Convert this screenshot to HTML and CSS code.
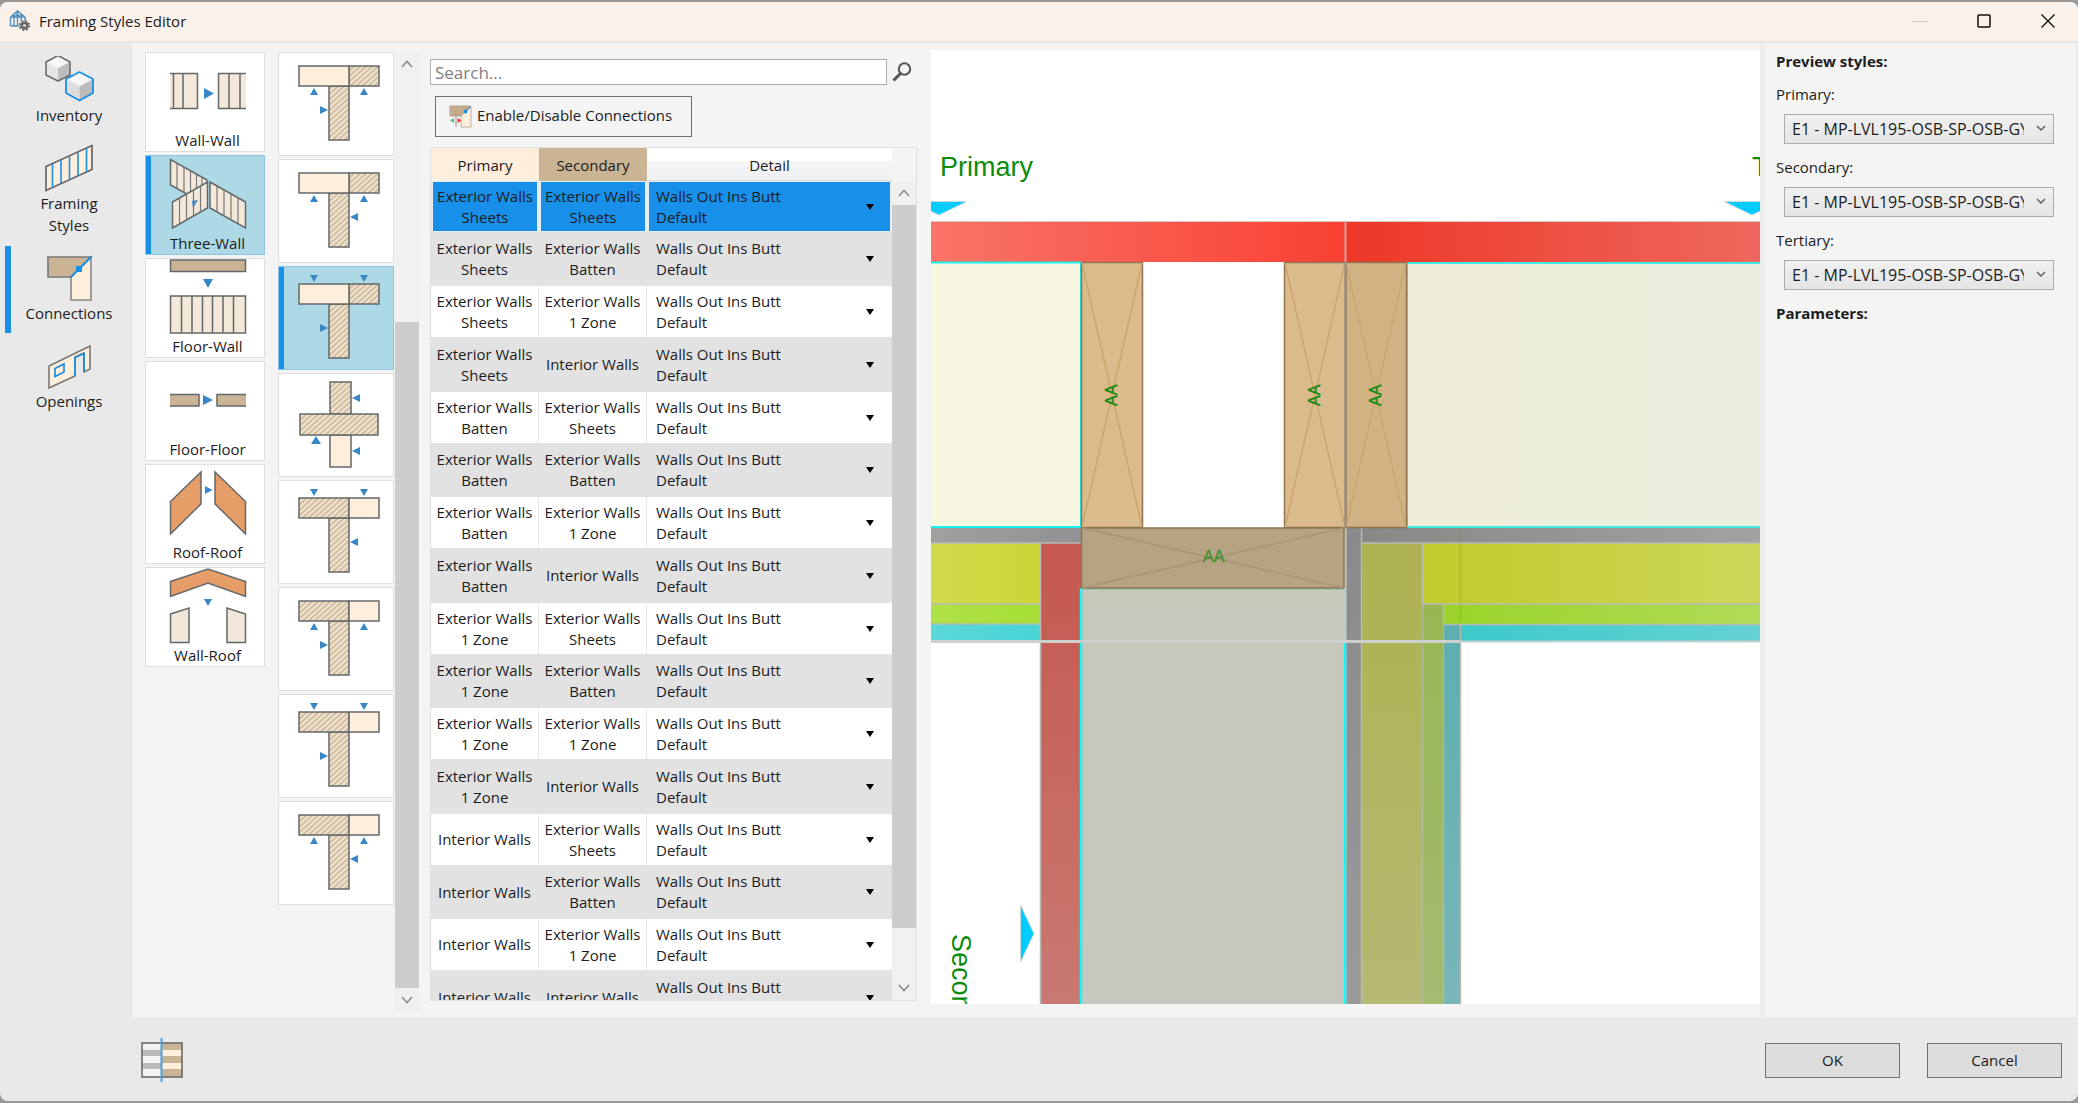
FILE: index.html
```html
<!DOCTYPE html>
<html lang="en">
<head>
<meta charset="utf-8">
<title>Framing Styles Editor</title>
<link rel="stylesheet" href="styles.css">
</head>
<body>
<svg class="defs" width="0" height="0" aria-hidden="true">
  <defs>
    <pattern id="hatch" width="4" height="4" patternUnits="userSpaceOnUse" patternTransform="rotate(-42)">
      <rect width="4" height="4" fill="#f0e4d2"/><rect width="4" height="2" fill="#d3bd9f"/>
    </pattern>
    <symbol id="tee-a" viewBox="0 0 116 104">
      <rect x="50" y="34" width="20" height="54" fill="url(#hatch)" class="ln"/>
      <rect x="70" y="14" width="30" height="20" fill="url(#hatch)" class="ln"/>
      <rect x="20" y="14" width="50" height="20" fill="#ffeedb" class="ln"/>
    </symbol>
    <symbol id="tee-b" viewBox="0 0 116 104">
      <rect x="50" y="34" width="20" height="54" fill="url(#hatch)" class="ln"/>
      <rect x="20" y="14" width="50" height="20" fill="url(#hatch)" class="ln"/>
      <rect x="70" y="14" width="30" height="20" fill="#ffeedb" class="ln"/>
    </symbol>
    <linearGradient id="redL"><stop offset="0" stop-color="#f97469"/><stop offset="1" stop-color="#f94132"/></linearGradient>
    <linearGradient id="redR"><stop offset="0" stop-color="#ed3727"/><stop offset="1" stop-color="#ef685e"/></linearGradient>
    <linearGradient id="greyL"><stop offset="0" stop-color="#a0a0a0"/><stop offset="1" stop-color="#929292"/></linearGradient>
    <linearGradient id="greyR"><stop offset="0" stop-color="#888"/><stop offset="1" stop-color="#a2a2a2"/></linearGradient>
    <linearGradient id="yelL"><stop offset="0" stop-color="#d0da4c"/><stop offset="1" stop-color="#ccd636"/></linearGradient>
    <linearGradient id="yelR"><stop offset="0" stop-color="#c1cb2b"/><stop offset="1" stop-color="#ced65a"/></linearGradient>
    <linearGradient id="limeL"><stop offset="0" stop-color="#aee146"/><stop offset="1" stop-color="#a7de36"/></linearGradient>
    <linearGradient id="limeR"><stop offset="0" stop-color="#9bd32a"/><stop offset="1" stop-color="#b0dc58"/></linearGradient>
    <linearGradient id="cyL"><stop offset="0" stop-color="#5ad8da"/><stop offset="1" stop-color="#48d3d5"/></linearGradient>
    <linearGradient id="cyR"><stop offset="0" stop-color="#3cc9ca"/><stop offset="1" stop-color="#65d2d4"/></linearGradient>
    <linearGradient id="insR"><stop offset="0" stop-color="#eeedd9"/><stop offset="1" stop-color="#ecedde"/></linearGradient>
    <linearGradient id="redV" x2="0" y2="1"><stop offset="0" stop-color="#c5584f"/><stop offset="1" stop-color="#c87972"/></linearGradient>
    <linearGradient id="greyV" x2="0" y2="1"><stop offset="0" stop-color="#8a8a8a"/><stop offset="1" stop-color="#9a9a9a"/></linearGradient>
    <linearGradient id="oliV" x2="0" y2="1"><stop offset="0" stop-color="#adb250"/><stop offset="1" stop-color="#b5b973"/></linearGradient>
    <linearGradient id="grnV" x2="0" y2="1"><stop offset="0" stop-color="#98b753"/><stop offset="1" stop-color="#a3bb72"/></linearGradient>
    <linearGradient id="teaV" x2="0" y2="1"><stop offset="0" stop-color="#5cafb0"/><stop offset="1" stop-color="#79b6b8"/></linearGradient>
    <linearGradient id="bodyV" x2="0" y2="1"><stop offset="0" stop-color="#c7c7ba"/><stop offset="1" stop-color="#c8c7c0"/></linearGradient>
  </defs>
</svg>

<div class="window">
  <header class="titlebar">
    <svg class="app-icon" width="22" height="22" viewBox="0 0 22 22" fill="none" aria-hidden="true">
      <path d="M1.500 7 8.500 1l7.500 6M1.500 7v9M16 7v4M1.500 7h14.500M1.500 16h9M5 4.500V16M8.500 1v15M12 4.500V11M5 7.500 8.500 4 12 7.500" stroke="#4f8fbd" stroke-width="1.400"/>
      <circle cx="15.500" cy="15.500" r="4" fill="#666"/><circle cx="15.500" cy="15.500" r="4.800" stroke="#666" stroke-width="1.600" stroke-dasharray="2 1.770"/><circle cx="15.500" cy="15.500" r="1.600" fill="#d8d8d8"/>
    </svg>
    <h1 class="title">Framing Styles Editor</h1>
    <div class="caption">
      <button class="cap-btn" aria-label="Minimize" disabled><svg width="14" height="14" viewBox="0 0 14 14"><path d="M0 7.500h14" stroke="#cfc8c2"/></svg></button>
      <button class="cap-btn" aria-label="Maximize"><svg width="14" height="14" viewBox="0 0 14 14" fill="none"><rect x="1" y="1" width="12" height="12" rx="1" stroke="#111" stroke-width="1.500"/></svg></button>
      <button class="cap-btn" aria-label="Close"><svg width="14" height="14" viewBox="0 0 14 14"><path d="m.500.500 13 13M13.500.500l-13 13" stroke="#111" stroke-width="1.400"/></svg></button>
    </div>
  </header>

  <div class="middle">
    <nav class="nav">
      <a class="nav-item" href="#inventory">
        <svg width="50" height="48" viewBox="0 2 50 48" stroke-linejoin="round" aria-hidden="true">
          <path d="M2 8v13l12 6V14z" fill="#e6e6e6"/><path d="M26 8v13l-12 6V14z" fill="#bdbdbd"/><path d="m2 8 12-6.500L26 8l-12 6z" fill="#f6f6f6"/><path d="M14 1.500 26 8v13l-12 6-12-6V8z" fill="none" stroke="#6b6b6b" stroke-width="1.600"/>
          <path d="M22 25v14l13.500 7.500V32z" fill="#ddd"/><path d="M49 25v14l-13.500 7.500V32z" fill="#bbb"/><path d="m22 25 13.500-7L49 25l-13.500 7z" fill="#f6f6f6"/><path d="M35.500 18 49 25v14l-13.500 7.500L22 39V25z" fill="none" stroke="#188fe8" stroke-width="1.800"/>
        </svg>
        <span>Inventory</span>
      </a>
      <a class="nav-item" href="#styles">
        <svg width="50" height="48" viewBox="0 0 50 48" aria-hidden="true">
          <path d="M2 22.500 48 1.500v24L2 46.500z" fill="#ffeedb" stroke="#666" stroke-width="1.700"/><path d="M8.500 20v23M17 16v23M25.500 12.500v23M34 8.500v23M42.500 4.500v23" stroke="#188fe8" stroke-width="1.600"/>
        </svg>
        <span>Framing<br>Styles</span>
      </a>
      <a class="nav-item active" href="#connections" aria-current="page">
        <svg width="50" height="48" viewBox="0 0 50 48" aria-hidden="true">
          <path d="M4 3h43L27 23H4z" fill="#cab494" stroke="#777" stroke-width="1.600"/><path d="M27 23 47 3v43H27z" fill="#ffeedb" stroke="#888" stroke-width="1.600"/><path d="M27 23 47 3" stroke="#188fe8" stroke-width="2"/><rect x="32" y="12" width="6" height="6" fill="#188fe8"/>
        </svg>
        <span>Connections</span>
      </a>
      <a class="nav-item" href="#openings">
        <svg width="50" height="48" viewBox="0 0 50 48" fill="none" aria-hidden="true">
          <path d="M5 24 46 4v23l-6 3V11l-9 4v19L5 46z" fill="#ffeedb" stroke="#777" stroke-width="1.600"/><path d="M31 34V15.500l9-4V29M11 26.500l9-4.500v8l-9 4.500z" stroke="#188fe8" stroke-width="1.700"/>
        </svg>
        <span>Openings</span>
      </a>
    </nav>

    <main class="content">
      <div class="types">
        <button class="card"><svg width="118" height="75" viewBox="1 1 118 75" aria-hidden="true">
          <path d="M25 21h28v36H25zM101 21H73v36h28z" fill="#f3e8da"/><path class="ln" d="M25 21.500h27.500v35H25M28.500 21v35M38 21v35M101 21.500H73.500v35H101M84 21v35M95 21v35"/><path class="ar" d="m59 36 10 5.500L59 47z"/></svg><span>Wall-Wall</span></button>
        <button class="card selected" aria-pressed="true"><svg width="118" height="75" viewBox="1 1 118 75" aria-hidden="true">
          <g fill="#f3e8da"><path d="M25.500 4.500 61 25v14L41 39 25.500 30zM27.500 47l35-20v26l-35 20z"/><path class="ln" d="M62 28v-3L25.500 4.500V30L41 38.500"/><path class="th" d="M32 8v26M39 12v26M45.500 16v20M51.500 20v13M57 23v7"/><path class="ln" fill="#f3e8da" d="m27.500 47 35-20v26l-35 20zM65 27l35.500 20v26L65 53z"/><path class="th" d="M34.500 43v26M41.500 39v26M48.500 35v26M55.500 31v26M72 31v26M79 35v26M86 39v26M93 43v26"/></g><path class="ar" d="m47 46 6-1-5 8z"/></svg><span>Three-Wall</span></button>
        <button class="card"><svg width="118" height="75" viewBox="1 1 118 75" aria-hidden="true">
          <path class="ln" fill="#cab494" d="M25.500 2h75v11.500h-75z"/><path class="ar" d="M58 21h10l-5 9z"/><path class="ln" fill="#f3e8da" d="M25.500 38h75v37h-75z"/><path class="ln" d="M36.500 38v37M47 38v37M57.500 38v37M67.500 38v37M78 38v37M88.500 38v37"/></svg><span>Floor-Wall</span></button>
        <button class="card"><svg width="118" height="75" viewBox="1 1 118 75" aria-hidden="true">
          <path class="ln" fill="#cab494" d="M25 33.500h29v11.500H25M101 33.500H72v11.500h29"/><path class="ar" d="m58 34 10 5-10 5z"/></svg><span>Floor-Floor</span></button>
        <button class="card"><svg width="118" height="75" viewBox="1 1 118 75" aria-hidden="true">
          <path class="ln" fill="#e79d68" d="M25.500 37.500 56 8v32L25.500 70zM70 8l30.500 29.500V70L70 40z"/><path class="ar" d="m60 22 7.500 4-7.500 4z"/></svg><span>Roof-Roof</span></button>
        <button class="card"><svg width="118" height="75" viewBox="1 1 118 75" aria-hidden="true">
          <path class="ln" fill="#e79d68" d="M25.500 14.500 63 2l37.500 12.500v15L63 16 25.500 29.500z"/><path class="ar" d="M59 32h8l-4 7z"/><path class="ln" fill="#f1e8da" d="m25.500 47 18.500-6v34.500H25.500zM82 41l18.500 6v28.500H82z"/></svg><span>Wall-Roof</span></button>
      </div>

      <div class="variants">
        <button class="card" aria-label="Three-wall variant 1"><svg width="114" height="102" viewBox="0 1 114 102"><use href="#tee-a" width="116" height="104"/><path class="ar" d="m31 43 4-7 4 7zM81 43l4-7 4 7zM41 54l8 4-8 4z"/></svg></button>
        <button class="card" aria-label="Three-wall variant 2"><svg width="114" height="102" viewBox="0 1 114 102"><use href="#tee-a" width="116" height="104"/><path class="ar" d="m31 43 4-7 4 7zM81 43l4-7 4 7zM79 54l-8 4 8 4z"/></svg></button>
        <button class="card selected" aria-pressed="true" aria-label="Three-wall variant 3"><svg width="114" height="102" viewBox="0 1 114 102"><use href="#tee-a" y="4" width="116" height="104"/><path class="ar" d="m31 9 4 7 4-7zM81 9l4 7 4-7zM41 58l8 4-8 4z"/></svg></button>
        <button class="card" aria-label="Three-wall variant 4"><svg width="114" height="102" viewBox="0 1 114 102"><path class="ln" fill="url(#hatch)" d="M51 9h21v32H51z"/><path class="ln" fill="#ffeedb" d="M51 62h21v32H51z"/><path class="ln" fill="url(#hatch)" d="M21 41h78v21H21z"/><path class="ar" d="m81 21-8 4 8 4zM81 74l-8 4 8 4zM32 71l5-8 5 8z"/></svg></button>
        <button class="card" aria-label="Three-wall variant 5"><svg width="114" height="102" viewBox="0 1 114 102"><use href="#tee-b" y="4" width="116" height="104"/><path class="ar" d="m31 9 4 7 4-7zM81 9l4 7 4-7zM79 58l-8 4 8 4z"/></svg></button>
        <button class="card" aria-label="Three-wall variant 6"><svg width="114" height="102" viewBox="0 1 114 102"><use href="#tee-b" width="116" height="104"/><path class="ar" d="m31 43 4-7 4 7zM81 43l4-7 4 7zM41 54l8 4-8 4z"/></svg></button>
        <button class="card" aria-label="Three-wall variant 7"><svg width="114" height="102" viewBox="0 1 114 102"><use href="#tee-b" y="4" width="116" height="104"/><path class="ar" d="m31 9 4 7 4-7zM81 9l4 7 4-7zM41 58l8 4-8 4z"/></svg></button>
        <button class="card" aria-label="Three-wall variant 8"><svg width="114" height="102" viewBox="0 1 114 102"><use href="#tee-b" width="116" height="104"/><path class="ar" d="m31 43 4-7 4 7zM81 43l4-7 4 7zM79 54l-8 4 8 4z"/></svg></button>
      </div>

      <div class="scrollbar variants-scroll" aria-hidden="true">
        <svg class="sb-arrow" viewBox="0 0 12 8"><path d="m1 7 5-5.500L11 7"/></svg>
        <div class="track"><div class="before"></div><div class="thumb"></div></div>
        <svg class="sb-arrow" viewBox="0 0 12 8"><path d="m1 1 5 5.500L11 1"/></svg>
      </div>

      <section class="connections">
        <div class="search">
          <input type="text" placeholder="Search..." aria-label="Search connections">
          <svg width="20" height="20" viewBox="0 0 20 20" fill="none" aria-hidden="true"><circle cx="12.500" cy="7" r="5.700" stroke="#555" stroke-width="2"/><path d="m8.500 11.500-7 7" stroke="#555" stroke-width="3"/></svg>
        </div>
        <button class="toggle">
          <svg width="24" height="24" viewBox="0 0 24 24" aria-hidden="true"><path d="M1 1h20L12 11H1z" fill="#c6ad8b" stroke="#b5a48c"/><path d="m12 11 10-9v20H12z" fill="#ffeedb" stroke="#b9b1a6"/><path d="M15 8 22 1" stroke="#188fe8"/><circle cx="16.500" cy="6.500" r="2" fill="#188fe8"/><path d="M7 9v13" stroke="#999"/><path d="M5 13v5l-4-2.500z" fill="#50c878"/><path d="M8.500 13v5l4-2.500z" fill="#f33"/></svg>
          <span>Enable/Disable Connections</span>
        </button>
        <div class="grid">
          <table>
            <colgroup><col class="c1"><col class="c2"><col class="c3"></colgroup>
            <thead><tr><th class="h1" scope="col">Primary</th><th class="h2" scope="col">Secondary</th><th class="h3" scope="col">Detail</th></tr></thead>
            <tbody>
              <tr class="selected"><td>Exterior Walls Sheets</td><td>Exterior Walls Sheets</td><td><button class="detail">Walls Out Ins Butt<br>Default</button></td></tr>
              <tr><td>Exterior Walls Sheets</td><td>Exterior Walls Batten</td><td><button class="detail">Walls Out Ins Butt<br>Default</button></td></tr>
              <tr><td>Exterior Walls Sheets</td><td>Exterior Walls 1&nbsp;Zone</td><td><button class="detail">Walls Out Ins Butt<br>Default</button></td></tr>
              <tr><td>Exterior Walls Sheets</td><td>Interior Walls</td><td><button class="detail">Walls Out Ins Butt<br>Default</button></td></tr>
              <tr><td>Exterior Walls Batten</td><td>Exterior Walls Sheets</td><td><button class="detail">Walls Out Ins Butt<br>Default</button></td></tr>
              <tr><td>Exterior Walls Batten</td><td>Exterior Walls Batten</td><td><button class="detail">Walls Out Ins Butt<br>Default</button></td></tr>
              <tr><td>Exterior Walls Batten</td><td>Exterior Walls 1&nbsp;Zone</td><td><button class="detail">Walls Out Ins Butt<br>Default</button></td></tr>
              <tr><td>Exterior Walls Batten</td><td>Interior Walls</td><td><button class="detail">Walls Out Ins Butt<br>Default</button></td></tr>
              <tr><td>Exterior Walls 1&nbsp;Zone</td><td>Exterior Walls Sheets</td><td><button class="detail">Walls Out Ins Butt<br>Default</button></td></tr>
              <tr><td>Exterior Walls 1&nbsp;Zone</td><td>Exterior Walls Batten</td><td><button class="detail">Walls Out Ins Butt<br>Default</button></td></tr>
              <tr><td>Exterior Walls 1&nbsp;Zone</td><td>Exterior Walls 1&nbsp;Zone</td><td><button class="detail">Walls Out Ins Butt<br>Default</button></td></tr>
              <tr><td>Exterior Walls 1&nbsp;Zone</td><td>Interior Walls</td><td><button class="detail">Walls Out Ins Butt<br>Default</button></td></tr>
              <tr><td>Interior Walls</td><td>Exterior Walls Sheets</td><td><button class="detail">Walls Out Ins Butt<br>Default</button></td></tr>
              <tr><td>Interior Walls</td><td>Exterior Walls Batten</td><td><button class="detail">Walls Out Ins Butt<br>Default</button></td></tr>
              <tr><td>Interior Walls</td><td>Exterior Walls 1&nbsp;Zone</td><td><button class="detail">Walls Out Ins Butt<br>Default</button></td></tr>
              <tr><td>Interior Walls</td><td>Interior Walls</td><td><button class="detail">Walls Out Ins Butt<br>Default</button></td></tr>
            </tbody>
          </table>
          <div class="scrollbar grid-scroll" aria-hidden="true">
            <svg class="sb-arrow" viewBox="0 0 12 8"><path d="m1 7 5-5.500L11 7"/></svg>
            <div class="track"><div class="thumb"></div><div class="after"></div></div>
            <svg class="sb-arrow" viewBox="0 0 12 8"><path d="m1 1 5 5.500L11 1"/></svg>
          </div>
        </div>
      </section>

      <section class="preview">
        <svg class="drawing" viewBox="931 50 829 954" preserveAspectRatio="xMinYMin slice" role="img" aria-label="Connection preview">
          <!-- outer sheathing -->
          <path d="M931 222h414v40H931z" fill="url(#redL)"/><path d="M1346 222h414v40h-414z" fill="url(#redR)"/>
          <path d="M931 221.500h829" stroke="#d8c4c2"/>
          <path d="M1345.500 221v41" stroke="#d5a29c" stroke-width="2"/>
          <!-- lower layers, left -->
          <path d="M931 528h150v15H931z" fill="url(#greyL)"/><path d="M931 543h109v61H931z" fill="url(#yelL)"/><path d="M931 604h109v20H931z" fill="url(#limeL)"/><path d="M931 624h109v17H931z" fill="url(#cyL)"/>
          <!-- lower layers, right -->
          <path d="M1361 528h399v15h-399z" fill="url(#greyR)"/><path d="M1422 543h338v61h-338z" fill="url(#yelR)"/><path d="M1443 604h317v20h-317z" fill="url(#limeR)"/><path d="M1460 624h300v17h-300z" fill="url(#cyR)"/>
          <path d="M1460.500 528v96" stroke="#77761c" opacity=".15" stroke-width="2"/>
          <!-- secondary wall layers -->
          <path d="M1041 543h40v461h-40z" fill="url(#redV)"/>
          <path d="M1081 588h264v416h-264z" fill="url(#bodyV)"/>
          <path d="M1346 528h15v476h-15z" fill="url(#greyV)"/><path d="M1361 543h61v461h-61z" fill="url(#oliV)"/><path d="M1422 604h21v400h-21z" fill="url(#grnV)"/><path d="M1443 624h17v380h-17z" fill="url(#teaV)"/>
          <g fill="none" stroke="#b9bab2" stroke-width="1.500"><path d="M931 543h150M931 604h109M931 624h109M1040.500 543v461M1760 543h-399M1361.500 528v476M1422.500 543v61M1422 604h338M1443.500 604v20M1443 624.500h317M1460.500 624v380"/><path d="M1422.500 604v400M1443.500 624v380" opacity=".7"/></g>
          <path d="M1345 528v476" stroke="#c2cccd" stroke-width="3"/>
          <path d="M1081 588v416M1345 642v362" stroke="#16f6f6" stroke-width="2.500"/><path d="M1082 589h262" stroke="#67c9b9"/>
          <path d="M931 641.500h530" stroke="#cdd0cd" stroke-width="3"/><path d="M1460 641.500h300" stroke="#c2d0cf" stroke-width="2"/>
          <!-- insulation -->
          <path d="M931 263h150v264H931z" fill="#f8f7e2"/><path d="M931 262.500h150V527H931" fill="none" stroke="#16f3f0" stroke-width="2"/>
          <path d="M1407 263h353v264h-353z" fill="url(#insR)"/><path d="M1760 263h-353v264h353" fill="none" stroke="#3eebe6" stroke-width="2"/>
          <!-- timber members -->
          <g stroke="#8f7553" stroke-width="1.500"><path d="M1081.500 262.500h61v265h-61zM1284.500 262.500h61v265h-61z" fill="#dbba8b"/><path d="M1346 262.500h60.500v265H1346z" fill="#d1b282"/><path d="M1081.500 528h262.500v60h-262.500z" fill="#b6a383"/></g>
          <g stroke="#c6a56e" stroke-width="1.300"><path d="m1082 263 60 264M1142 263l-60 264M1285 263l60 264M1345 263l-60 264M1346 263l60 264M1406 263l-60 264"/></g>
          <path d="m1082 528 262 60M1344 528l-262 60" stroke="#a8946f" stroke-width="1.300"/>
          <path d="M1345.500 262v266" stroke="#9b8b81" stroke-width="2"/>
          <g class="mark"><text transform="translate(1117 406) rotate(-90)">AA</text><text transform="translate(1320 406) rotate(-90)">AA</text><text transform="translate(1381 406) rotate(-90)">AA</text><text x="1203" y="562" opacity=".7">AA</text></g>
          <!-- direction markers -->
          <g fill="#00ccff" stroke="#ccd8dc"><path d="M911 201.500h56l-28 13.500zM1724 201.500h56l-28 13.500zM1020.500 905v57l13.500-28.500z"/></g>
          <g class="label"><text x="940" y="176">Primary</text><text x="1752" y="176">T</text><text transform="translate(952 934) rotate(90)">Secondary</text></g>
        </svg>
      </section>

      <aside class="panel">
        <h2>Preview styles:</h2>
        <div class="field"><label for="p1">Primary:</label><div class="combo"><select id="p1"><option>E1 - MP-LVL195-OSB-SP-OSB-GYP</option></select><svg viewBox="0 0 10 7"><path d="m1 1 4 4 4-4"/></svg></div></div>
        <div class="field"><label for="p2">Secondary:</label><div class="combo"><select id="p2"><option>E1 - MP-LVL195-OSB-SP-OSB-GYP</option></select><svg viewBox="0 0 10 7"><path d="m1 1 4 4 4-4"/></svg></div></div>
        <div class="field"><label for="p3">Tertiary:</label><div class="combo"><select id="p3"><option>E1 - MP-LVL195-OSB-SP-OSB-GYP</option></select><svg viewBox="0 0 10 7"><path d="m1 1 4 4 4-4"/></svg></div></div>
        <h2>Parameters:</h2>
      </aside>
    </main>
  </div>

  <footer class="footer">
    <button class="compare" aria-label="Compare materials">
      <svg width="42" height="44" viewBox="0 0 42 44"><path d="M1 5h20v34H1z" fill="#f4f4f4"/><path d="M1 12h20v6H1zM1 25h20v6H1z" fill="#bababa"/><path d="M21 5h20v34H21z" fill="#cab494"/><path d="M21 12h20v6H21zM21 25h20v6H21z" fill="#ffeedb"/><rect x="1" y="5" width="40" height="34" fill="none" stroke="#6b6b6b" stroke-width="1.600"/><path d="M20.500 0v44" stroke="#45a3e8" stroke-width="2"/></svg>
    </button>
    <div class="actions"><button class="push">OK</button><button class="push">Cancel</button></div>
  </footer>
</div>
</body>
</html>
```
FILE: styles.css
```css
* { box-sizing: border-box; }
body {
  margin: 0;
  height: 100vh;
  padding: 2px 0;
  background: #999;
  color: #1c1c1c;
  font: 15px/22px "Open Sans", "Noto Sans", sans-serif;
  overflow: hidden;
}
button, input, select { font: inherit; color: inherit; margin: 0; }
button { padding: 0; border: 0; background: none; }
svg { display: block; flex: none; }
.defs { position: absolute; }

.window {
  height: 100%;
  display: flex;
  flex-direction: column;
  background: #e9e9e9;
  border-radius: 8px;
  overflow: hidden;
}

.titlebar {
  flex: none;
  height: 41px;
  display: flex;
  align-items: center;
  gap: 8px;
  padding: 0 0 2px 9px;
  background: #faf2ea;
  border-bottom: 2px solid #e8e6e4;
}
.title { margin: 0; font-size: 15px; font-weight: 400; }
.caption { margin-left: auto; margin-right: -2px; display: flex; }
.cap-btn { width: 64px; height: 37px; display: grid; place-items: center; }

.middle { flex: 1; min-height: 0; display: flex; padding-right: 2px; }

.nav { flex: none; width: 133px; display: flex; flex-direction: column; gap: 1px; padding: 5px 0 5px 5px; }
.nav-item {
  display: flex;
  flex-direction: column;
  align-items: center;
  padding: 8px 6px 9px 0;
  border-left: 6px solid transparent;
  color: inherit;
  text-align: center;
  text-decoration: none;
}
.nav-item.active { border-color: #188fe8; }

.content { flex: 1; min-width: 0; display: flex; background: #f4f4f4; }

.types, .variants { flex: none; display: flex; flex-direction: column; gap: 3px; padding-top: 9px; }
.types { width: 120px; margin-left: 12px; }
.variants { width: 116px; margin-left: 13px; }
.card {
  flex: none;
  height: 100px;
  display: flex;
  flex-direction: column;
  align-items: center;
  justify-content: flex-start;
  background: #fff;
  border: 1px solid #dedede;
}
.variants .card { height: 104px; }
.card svg { overflow: visible; }
.card span { padding: 1px 0 0 5px; }
.card.selected { background: #add8e6; border-color: #90c4e4; box-shadow: inset 5px 0 #188fe8; }
.ln { stroke: #63686a; stroke-width: 1.5px; }
.card svg .ln:not([fill]) { fill: none; }
.th { fill: none; stroke: #777; stroke-width: 1.2px; }
.ar { fill: #3a87c8; }

.scrollbar { flex: none; width: 24px; display: flex; flex-direction: column; align-items: center; background: #f0f0f0; }
.sb-arrow { width: 12px; height: 8px; margin: 8px 0; fill: none; stroke: #8c8c8c; stroke-width: 1.6; }
.track { flex: 1; align-self: stretch; display: flex; flex-direction: column; }
.thumb { background: #cdcdcd; }
.variants-scroll { margin: 9px 0 5px 1px; }
.variants-scroll .before { flex: 246; }
.variants-scroll .thumb { flex: 665; }
.grid-scroll { margin-top: 33px; }
.grid-scroll .thumb { flex: 724; }
.grid-scroll .after { flex: 48; }

.connections { flex: none; width: 487px; margin: 16px 14px 16px 11px; display: flex; flex-direction: column; align-items: flex-start; }
.search { display: flex; align-items: center; gap: 5px; }
.search input {
  width: 457px;
  height: 26px;
  padding: 0 4px;
  border: 1px solid #abadb3;
  border-radius: 0;
  background: #fff;
  font-size: 17px;
  outline: 0;
}
.search input::placeholder { color: #808080; opacity: 1; }
.toggle {
  height: 41px;
  width: 257px;
  margin: 11px 5px 10px;
  display: flex;
  align-items: center;
  gap: 4px;
  padding-left: 13px;
  border: 1px solid #707070;
  background: #f4f4f4;
}
.toggle span { padding-bottom: 4px; }

.grid { flex: 1; min-height: 0; width: 100%; display: flex; overflow: hidden; border: 1px solid #dfe0e1; }
table { flex: 1; align-self: flex-start; table-layout: fixed; border-collapse: separate; border-spacing: 0; width: 461px; line-height: 21px; }
.c1, .c2 { width: 108px; }
th { height: 33px; padding: 2px 0 0; font-weight: 400; }
.h1 { background: #ffeedb; }
.h2 { background: #cab494; }
.h3 { background: linear-gradient(#fff 40%, #f4f5f7 40%, #f0f1f4); border-bottom: 1px solid #dcdcdc; }
td { height: 51px; padding: 0 4px; text-align: center; background: #fff; border-right: 1px solid #e8e8e8; }
tr:nth-child(even) td { height: 54px; background: #e2e2e2; border-color: #e2e2e2; }
tr:nth-child(4n) td { height: 55px; }
td:last-child { border-right: 0; }
tr.selected td { background: #188fe8; border: 2px solid #e9edf2; border-width: 1px 2px; padding: 0 2px; }
.detail { position: relative; display: block; width: 100%; padding: 0 5px; text-align: left; }
.detail::after {
  content: "";
  position: absolute;
  right: 14px;
  top: 50%;
  margin-top: -3px;
  border: 4px solid transparent;
  border-top: 6px solid #000;
  border-bottom: 0;
}

.preview { flex: 1; min-width: 0; margin: 7px 0 13px; background: #fff; overflow: hidden; }
.drawing { width: 100%; height: 100%; }
.mark { font: 16px "Liberation Sans", Arial, sans-serif; fill: #128a12; stroke: #128a12; stroke-width: .4px; }
.label { font: 27px "Liberation Sans", Arial, sans-serif; fill: #0c8c0c; }

.panel { flex: none; width: 316px; padding: 7px 22px 0 11px; border-left: 5px solid #efefef; }
.panel h2 { margin: 0; font-size: 15px; line-height: 22px; font-weight: 700; }
.panel h2:first-child { margin-bottom: 11px; }
.field label { display: block; }
.combo { position: relative; margin: 9px 0 12px 8px; }
.combo select {
  display: block;
  width: 100%;
  height: 30px;
  padding: 0 29px 0 7px;
  border: 1px solid #acacac;
  border-radius: 0;
  background: linear-gradient(#f0f0f0, #e5e5e5);
  font-size: 16px;
  text-overflow: clip;
  appearance: none;
}
.combo svg { position: absolute; right: 8px; top: 11px; width: 10px; height: 7px; fill: none; stroke: #606060; stroke-width: 1.5; pointer-events: none; }

.footer { flex: none; height: 84px; display: flex; align-items: center; justify-content: space-between; padding: 2px 16px 0 141px; }
.actions { display: flex; gap: 27px; }
.push { width: 135px; height: 35px; background: #ddd; border: 1px solid #707070; }
```
